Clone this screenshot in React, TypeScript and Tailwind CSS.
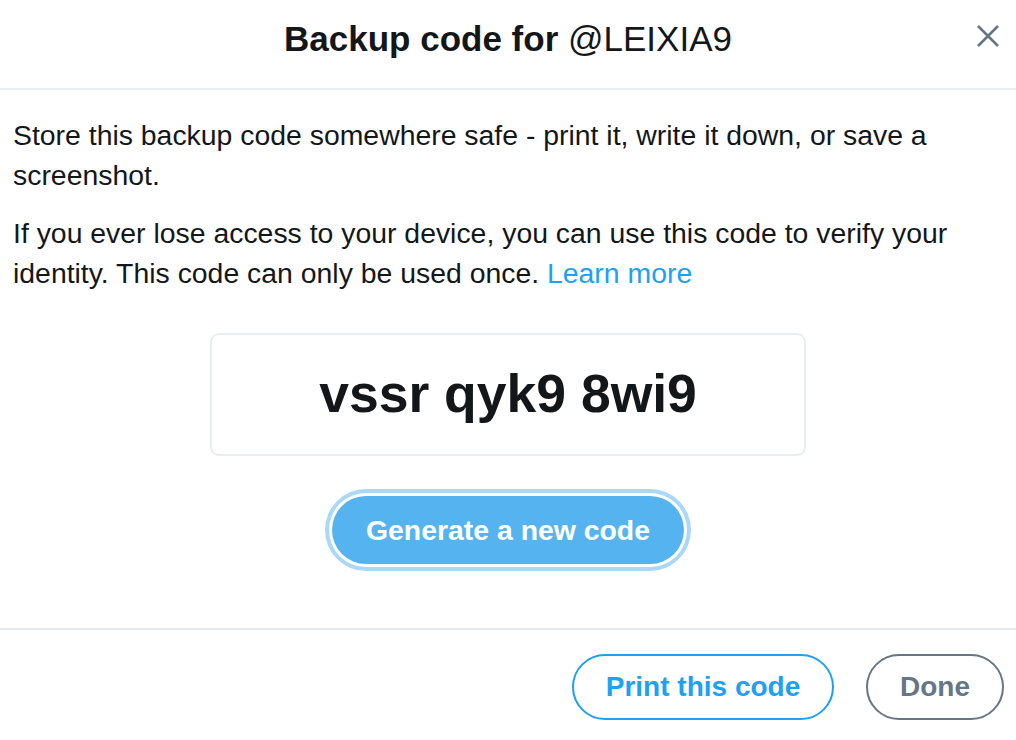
export default function App() {
  return (
    <div
      className="flex h-[740px] w-[1016px] flex-col bg-white text-[#14171a]"
      style={{ fontFamily: '"Liberation Sans", Arial, sans-serif' }}
    >
      <header className="relative flex h-[90px] shrink-0 items-center justify-center border-b-2 border-[#e6ecf0]">
        <h1 className="pb-[10px] text-[35px] font-bold">
          Backup code for <span className="font-normal">@LEIXIA9</span>
        </h1>
        <button className="absolute right-[17px] top-[25px] text-[#657786]">
          <svg width="22" height="22" viewBox="0 0 22 22" fill="none" stroke="currentColor" strokeWidth="2.6">
            <path d="M1 1 21 21M21 1 1 21" />
          </svg>
        </button>
      </header>

      <main className="flex-1 px-[13px] pt-[25px]">
        <p className="text-[28.4px] leading-[40px]">
          Store this backup code somewhere safe - print it, write it down, or save a screenshot.
        </p>
        <p className="mt-[18px] text-[28.4px] leading-[40px]">
          If you ever lose access to your device, you can use this code to verify your identity. This
          code can only be used once. <span className="text-[#1da1f2]">Learn more</span>
        </p>

        <div className="mx-auto mt-[40px] flex h-[123px] w-[596px] items-center justify-center rounded-[9px] border-2 border-[#e8edf1]">
          <span className="text-[53.5px] font-bold">vssr qyk9 8wi9</span>
        </div>

        <div className="mt-[33px] flex justify-center">
          <div className="rounded-full bg-[#aad8f7] p-[4px]">
            <div className="rounded-full bg-white p-[3px]">
              <button className="h-[68px] w-[352px] rounded-full bg-[#55b4f0] text-[28.4px] font-bold text-white">
                Generate a new code
              </button>
            </div>
          </div>
        </div>
      </main>

      <footer className="flex h-[112px] shrink-0 items-start justify-end gap-[32px] border-t-2 border-[#e6ecf0] pr-[12px] pt-[24px]">
        <button className="h-[66px] w-[262px] rounded-full border-2 border-[#1da1f2] text-[28px] font-bold text-[#1da1f2]">
          Print this code
        </button>
        <button className="h-[66px] w-[138px] rounded-full border-2 border-[#657786] text-[28px] font-bold text-[#657786]">
          Done
        </button>
      </footer>
    </div>
  )
}
